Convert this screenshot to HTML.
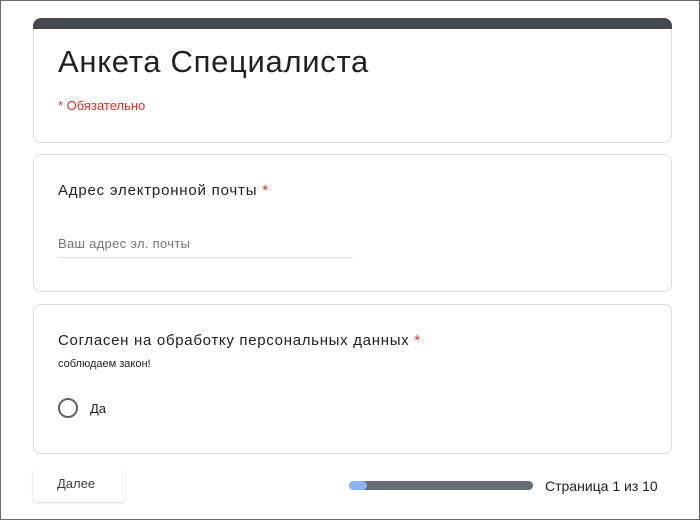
<!DOCTYPE html>
<html><head><meta charset="utf-8"><style>
*{box-sizing:border-box;margin:0;padding:0}
html,body{width:700px;height:520px;overflow:hidden;background:#fff}
body{font-family:"Liberation Sans",sans-serif;color:#202124;position:relative}
.frame{position:absolute;left:0;top:0;width:700px;height:520px;border:1px solid #6b6b6b}
.card{position:absolute;left:33px;width:639px;border:1px solid #dadce0;border-radius:8px;background:#fff}
.top{position:absolute;left:33px;top:18px;width:639px;height:11px;background:#45484e;border-radius:8px 8px 0 0}
.t{position:absolute;white-space:nowrap}
.r{color:#d93025}
</style></head><body>
<div class="frame"></div>
<div class="card" style="top:18px;height:125px"></div>
<div class="top"></div>
<div class="t" style="left:58px;top:44px;font-size:31px;letter-spacing:0.7px;color:#202124">Анкета Специалиста</div>
<div class="t r" style="left:58px;top:98px;font-size:13px">* Обязательно</div>

<div class="card" style="top:154px;height:138px"></div>
<div class="t" style="left:58px;top:182px;font-size:15px;letter-spacing:0.8px">Адрес электронной почты <span class="r">*</span></div>
<div class="t" style="left:58px;top:236px;font-size:13px;color:#70757a;letter-spacing:0.3px">Ваш адрес эл. почты</div>
<div style="position:absolute;left:58px;top:257px;width:295px;height:1px;background:#e0e0e0"></div>

<div class="card" style="top:304px;height:150px"></div>
<div class="t" style="left:58px;top:332px;font-size:15px;letter-spacing:0.7px">Согласен на обработку персональных данных <span class="r">*</span></div>
<div class="t" style="left:58px;top:358px;font-size:11px">соблюдаем закон!</div>
<div style="position:absolute;left:58px;top:398px;width:20px;height:20px;border:2px solid #5f6368;border-radius:50%"></div>
<div class="t" style="left:90px;top:401px;font-size:13px">Да</div>

<div style="position:absolute;left:33px;top:466px;width:92px;height:36px;background:#fff;border-radius:4px;box-shadow:0 1px 2px rgba(0,0,0,.15)"></div>
<div class="t" style="left:57px;top:476px;font-size:13px;color:#3c4043">Далее</div>
<div style="position:absolute;left:349px;top:481px;width:184px;height:9px;background:#676b72;border-radius:5px"></div>
<div style="position:absolute;left:349px;top:481px;width:18px;height:9px;background:#8ab4f8;border-radius:5px"></div>
<div class="t" style="left:545px;top:478px;font-size:14px;color:#202124">Страница 1 из 10</div>
</body></html>
